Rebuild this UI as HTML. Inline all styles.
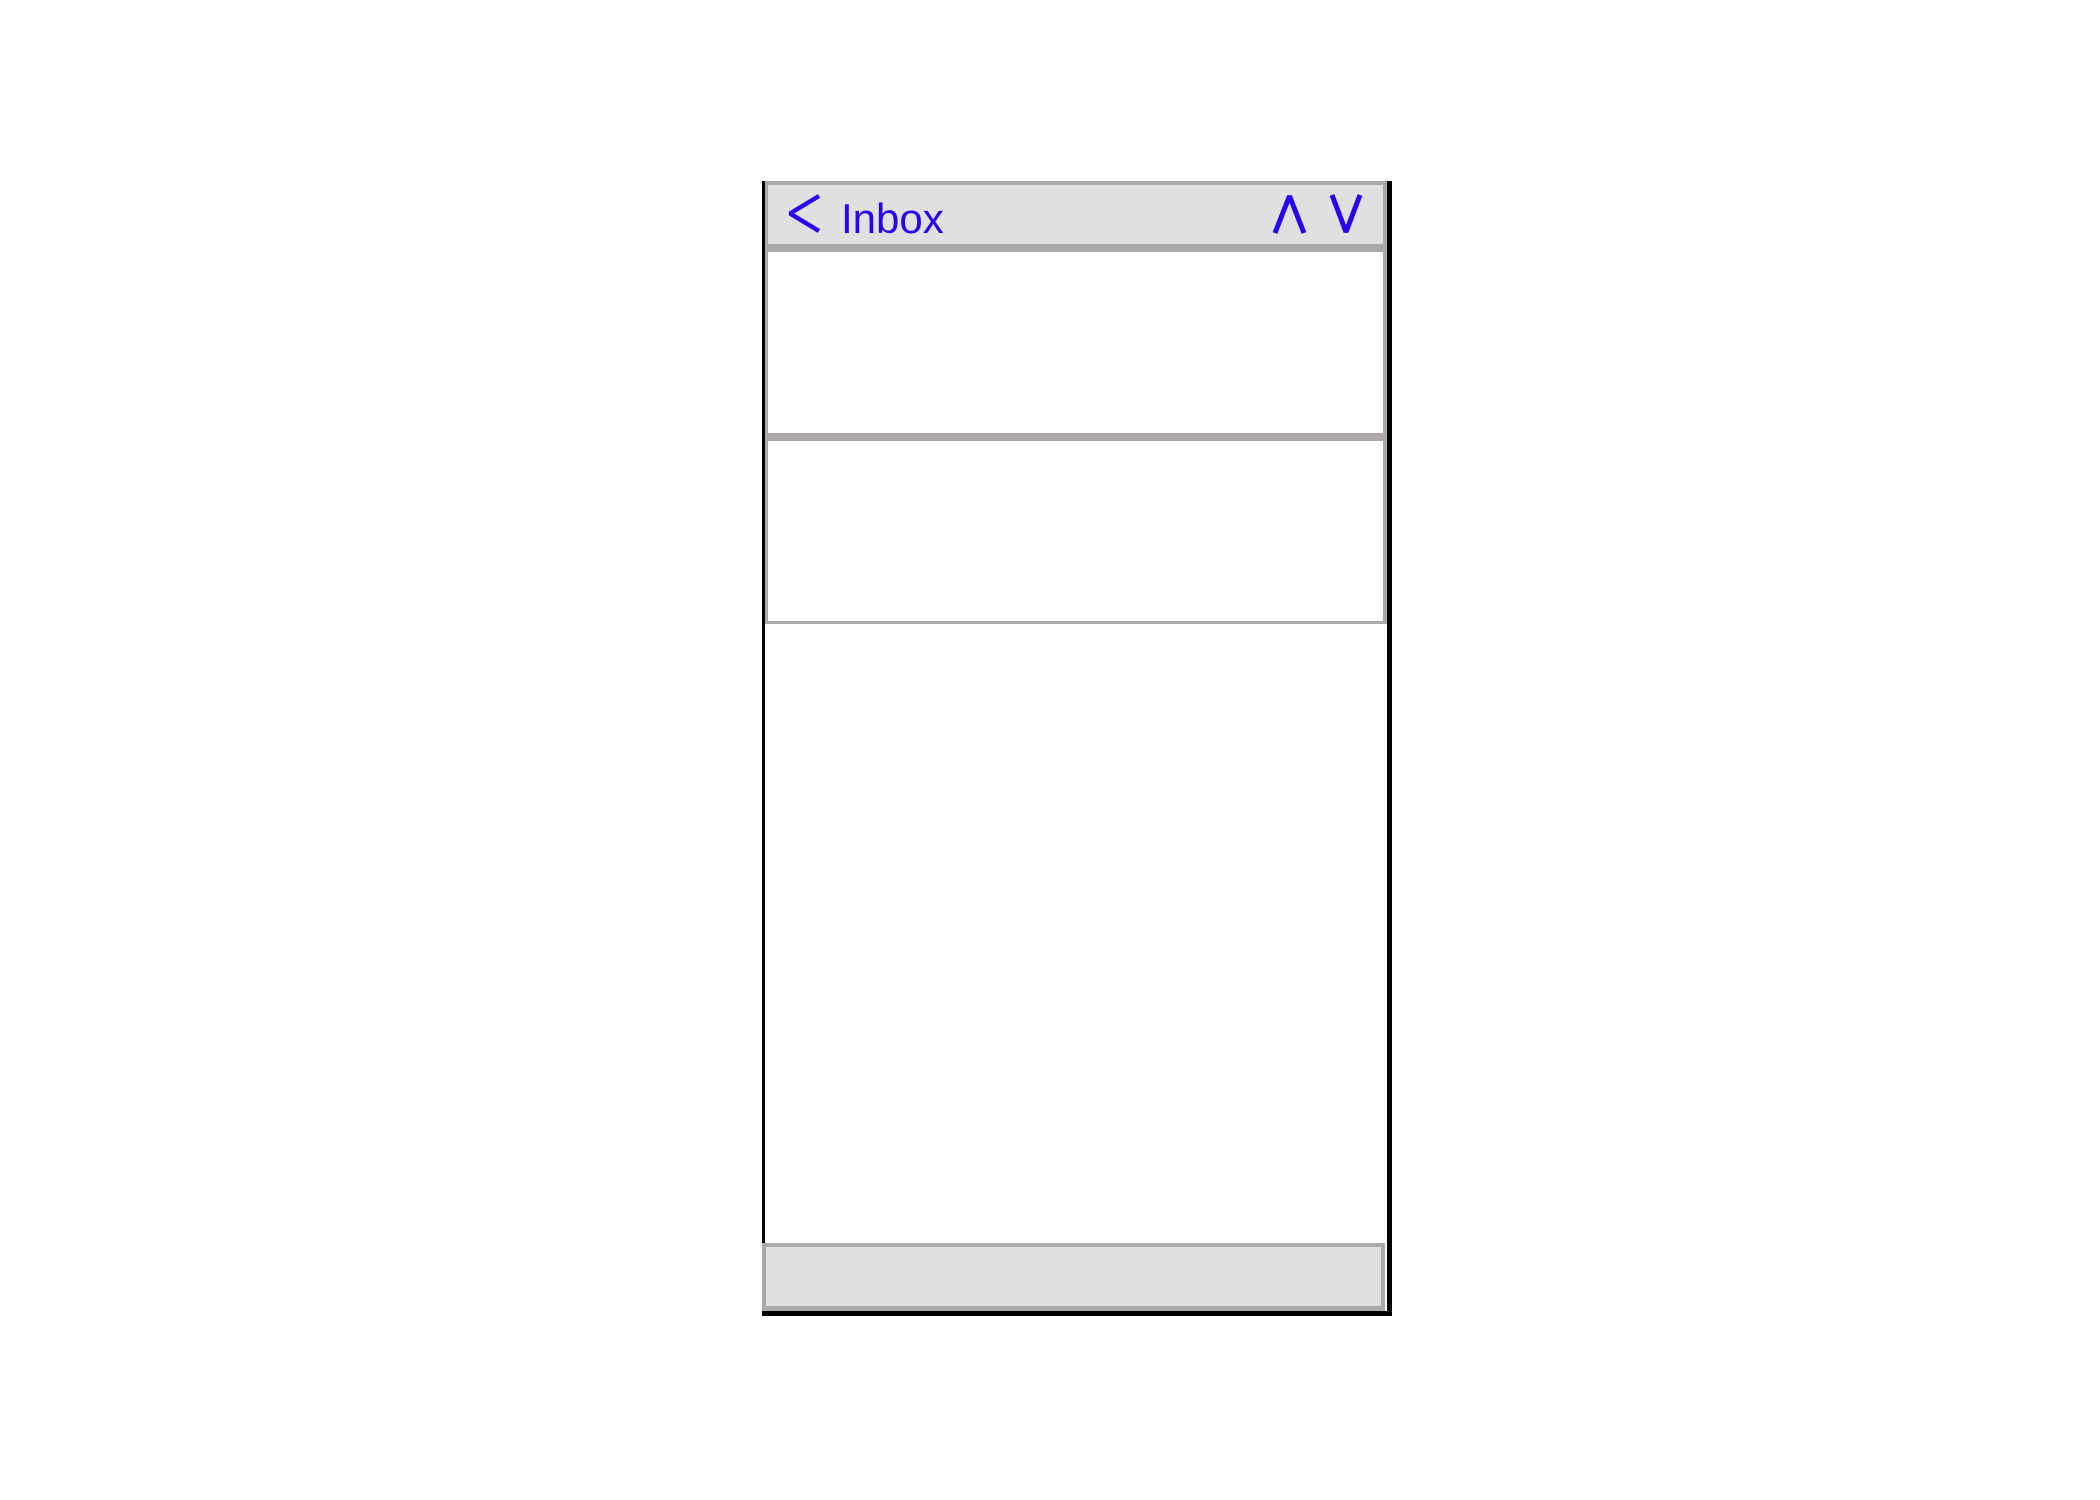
<!DOCTYPE html>
<html><head><meta charset="utf-8"><style>
html,body{margin:0;padding:0;width:2100px;height:1500px;background:#fff;overflow:hidden;position:relative;font-family:"Liberation Sans",sans-serif}
div{position:absolute;box-sizing:border-box}
</style></head><body>
<div style="left:762px;top:181px;width:3px;height:1135px;background:#000"></div>
<div style="left:1387px;top:181px;width:5px;height:1135px;background:#000"></div>
<div style="left:762px;top:1311px;width:630px;height:5px;background:#000"></div>
<div style="left:765px;top:181px;width:622px;height:71px;background:#e0e0e0;border:4px solid #aba8a7;border-left-width:3px;border-bottom-width:8px"></div>
<svg style="position:absolute;left:0;top:0" width="2100" height="400">
<polyline points="819,196 790,213.5 819,231" fill="none" stroke="#2a00f0" stroke-width="4.5" stroke-linejoin="bevel"/>
<polyline points="1275,233 1289.5,196 1304,233" fill="none" stroke="#2a00f0" stroke-width="5" stroke-linejoin="bevel"/>
<polyline points="1332,195 1346,232 1360,195" fill="none" stroke="#2a00f0" stroke-width="5" stroke-linejoin="bevel"/>
</svg>
<div style="left:841px;top:195px;font-size:42px;line-height:48px;color:#2a00f0;white-space:nowrap">Inbox</div>
<div style="left:765px;top:252px;width:622px;height:189px;background:#fff;border-left:3px solid #aba8a7;border-right:4px solid #aba8a7;border-bottom:8px solid #aba8a7"></div>
<div style="left:765px;top:441px;width:622px;height:183px;background:#fff;border-left:3px solid #aba8a7;border-right:4px solid #aba8a7;border-bottom:3px solid #aba8a7"></div>
<div style="left:762px;top:1243px;width:623px;height:68px;background:#e0e0e0;border:4px solid #aba8a7;border-bottom-width:5px"></div>
</body></html>
